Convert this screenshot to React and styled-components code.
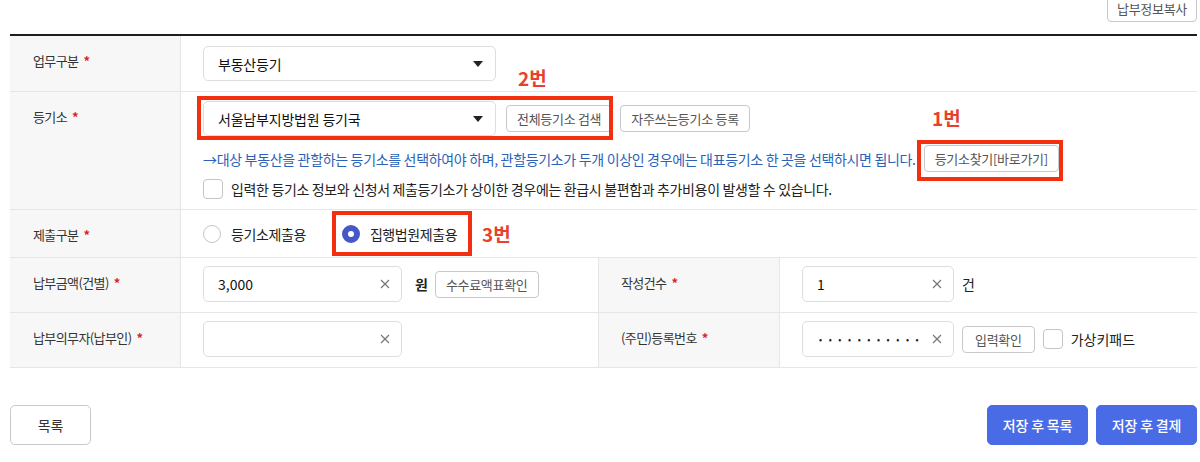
import React from 'react'
import styled, { createGlobalStyle } from 'styled-components'

const GlobalStyle = createGlobalStyle`
  body {
    margin: 0;
    background: #fff;
    font-family: "Noto Sans CJK KR", "Noto Sans", sans-serif;
    color: #222;
  }
`

const Page = styled.div`
  position: relative;
  width: 1200px;
  height: 462px;
  padding: 0 3px 0 10px;
  box-sizing: border-box;
  overflow: hidden;
`

const TopBar = styled.div`
  height: 34px;
  display: flex;
  justify-content: flex-end;
  align-items: flex-start;
`

const Table = styled.div`
  border-top: 2px solid #1e1e1e;
  border-bottom: 1px solid #e6e6e6;
`

const Row = styled.div`
  display: grid;
  grid-template-columns: ${(p) => (p.$split ? '171px 417px 182px 1fr' : '171px 1fr')};
  height: ${(p) => p.$h || 54}px;
  & + & {
    border-top: 1px solid #e6e6e6;
  }
`

const Label = styled.div`
  background: #f7f7f7;
  padding: 15px 0 0 ${(p) => p.$pl || 23}px;
  font-size: 13px;
  line-height: 20px;
  color: #333;
  letter-spacing: -0.6px;
  border-right: 1px solid #e6e6e6;
  border-left: ${(p) => (p.$divider ? '1px solid #e6e6e6' : 'none')};
`

const Req = styled.span`
  color: #d8262a;
  font-weight: 700;
  margin-left: 5px;
`

const Cell = styled.div`
  padding: ${(p) => p.$pad || '10px 0 0 22px'};
  display: flex;
  flex-direction: column;
  justify-content: ${(p) => (p.$center ? 'center' : 'flex-start')};
`

const Line = styled.div`
  display: flex;
  align-items: center;
  gap: ${(p) => p.$gap ?? 8}px;
  min-height: ${(p) => p.$h || 20}px;
  margin-top: ${(p) => p.$mt || 0}px;
`

const Select = styled.div`
  width: 293px;
  height: 35px;
  box-sizing: border-box;
  border: 1px solid #dedede;
  border-radius: 5px;
  display: flex;
  align-items: center;
  justify-content: space-between;
  padding: 0 12px 0 14px;
  font-size: 14px;
  color: #111;
  letter-spacing: -0.2px;
  margin-right: 2px;
  &::after {
    content: '';
    border-left: 5px solid transparent;
    border-right: 5px solid transparent;
    border-top: 6px solid #222;
  }
`

const SmallButton = styled.button`
  height: 27px;
  padding: 0 ${(p) => p.$px || 10}px;
  border: 1px solid #c9c9c9;
  border-radius: 4px;
  background: #fff;
  font-family: inherit;
  font-size: 13px;
  color: #555;
  letter-spacing: -0.3px;
  white-space: nowrap;
  margin-top: ${(p) => p.$mt || 0}px;
`

const Notice = styled.span`
  font-size: 14px;
  color: #2b62b8;
  letter-spacing: -0.33px;
  white-space: nowrap;
`

const Text = styled.span`
  font-size: 14px;
  color: #222;
  letter-spacing: -0.35px;
  white-space: nowrap;
`

const Check = styled.span`
  width: 18px;
  height: 18px;
  border: 1px solid #c4c4c4;
  border-radius: 4px;
  background: #fff;
  flex: none;
  margin-left: ${(p) => p.$ml || 0}px;
`

const Radio = styled.span`
  width: ${(p) => (p.$on ? 6 : 16)}px;
  height: ${(p) => (p.$on ? 6 : 16)}px;
  border-radius: 50%;
  border: ${(p) => (p.$on ? '6px solid #4658c8' : '1px solid #c4c4c4')};
  background: #fff;
  flex: none;
`

const RadioItem = styled.label`
  display: flex;
  align-items: center;
  gap: 10px;
  font-size: 14px;
  color: #222;
  letter-spacing: -0.4px;
  margin-right: 36px;
`

const Input = styled.div`
  width: ${(p) => p.$w}px;
  height: 36px;
  box-sizing: border-box;
  border: 1px solid #dedede;
  border-radius: 5px;
  display: flex;
  align-items: center;
  padding: 0 11px 0 14px;
  font-size: 14px;
  color: #111;
  overflow: hidden;
`

const Value = styled.span`
  flex: 1;
  overflow: hidden;
  white-space: nowrap;
`

const Dots = styled.span`
  flex: 1;
  overflow: hidden;
  white-space: nowrap;
  font-size: 9px;
  letter-spacing: 6.6px;
  padding-left: 2px;
  color: #222;
`

const Clear = styled.svg`
  width: 10px;
  height: 10px;
  flex: none;
  margin-left: 4px;
`

const Unit = styled.span`
  font-size: 14px;
  font-weight: ${(p) => (p.$bold ? 700 : 400)};
  color: #222;
  margin: 0 ${(p) => p.$mr ?? 0}px 0 ${(p) => p.$ml ?? 10}px;
`

const Footer = styled.div`
  display: flex;
  justify-content: space-between;
  margin-top: 37px;
`

const Group = styled.div`
  display: flex;
  gap: 8px;
`

const BigButton = styled.button`
  height: 40px;
  width: ${(p) => p.$w}px;
  border-radius: 5px;
  font-family: inherit;
  font-size: 14px;
  letter-spacing: -0.2px;
  border: 1px solid ${(p) => (p.$primary ? '#4a6be6' : '#c9c9c9')};
  background: ${(p) => (p.$primary ? '#4a6be6' : '#fff')};
  color: ${(p) => (p.$primary ? '#fff' : '#333')};
  font-weight: ${(p) => (p.$primary ? 500 : 400)};
`

const Marker = styled.div`
  position: absolute;
  left: ${(p) => p.$x}px;
  top: ${(p) => p.$y}px;
  width: ${(p) => p.$w}px;
  height: ${(p) => p.$h}px;
  box-sizing: border-box;
  border: 4px solid #f2300f;
  pointer-events: none;
`

const MarkerTag = styled.div`
  position: absolute;
  left: ${(p) => p.$x}px;
  top: ${(p) => p.$y}px;
  font-family: "Noto Sans CJK KR", sans-serif;
  font-weight: 700;
  font-size: 19px;
  line-height: 22px;
  color: #e8402c;
`

const X = () => (
  <Clear viewBox="0 0 10 10">
    <path d="M1 1L9 9M9 1L1 9" stroke="#777" strokeWidth="1.2" />
  </Clear>
)

export default function App() {
  return (
    <>
      <GlobalStyle />
      <Page>
        <TopBar>
          <SmallButton $mt={-5} $px={9}>납부정보복사</SmallButton>
        </TopBar>
        <Table>
          <Row $h={55}>
            <Label>업무구분<Req>*</Req></Label>
            <Cell>
              <Select>부동산등기</Select>
            </Cell>
          </Row>
          <Row $h={117}>
            <Label>등기소<Req>*</Req></Label>
            <Cell $pad="9px 0 0 22px">
              <Line $h={35}>
                <Select>서울남부지방법원 등기국</Select>
                <SmallButton>전체등기소 검색</SmallButton>
                <SmallButton>자주쓰는등기소 등록</SmallButton>
              </Line>
              <Line $h={27} $mt={9}>
                <Notice>→대상 부동산을 관할하는 등기소를 선택하여야 하며, 관할등기소가 두개 이상인 경우에는 대표등기소 한 곳을 선택하시면 됩니다.</Notice>
                <SmallButton>등기소찾기[바로가기]</SmallButton>
              </Line>
              <Line $h={20} $mt={7}>
                <Check />
                <Text>입력한 등기소 정보와 신청서 제출등기소가 상이한 경우에는 환급시 불편함과 추가비용이 발생할 수 있습니다.</Text>
              </Line>
            </Cell>
          </Row>
          <Row $h={47}>
            <Label>제출구분<Req>*</Req></Label>
            <Cell $pad="0 0 0 22px" $center>
              <Line $gap={0}>
                <RadioItem><Radio />등기소제출용</RadioItem>
                <RadioItem><Radio $on />집행법원제출용</RadioItem>
              </Line>
            </Cell>
          </Row>
          <Row $split>
            <Label>납부금액(건별)<Req>*</Req></Label>
            <Cell $pad="8px 0 0 22px">
              <Line $gap={0}>
                <Input $w={199}><Value>3,000</Value><X /></Input>
                <Unit $bold $ml={13} $mr={7}>원</Unit>
                <SmallButton>수수료액표확인</SmallButton>
              </Line>
            </Cell>
            <Label $divider $pl={22}>작성건수<Req>*</Req></Label>
            <Cell $pad="8px 0 0 22px">
              <Line $gap={0}>
                <Input $w={152}><Value>1</Value><X /></Input>
                <Unit $ml={8}>건</Unit>
              </Line>
            </Cell>
          </Row>
          <Row $split>
            <Label>납부의무자(납부인)<Req>*</Req></Label>
            <Cell $pad="8px 0 0 22px">
              <Line $gap={0}>
                <Input $w={199}><Value /><X /></Input>
              </Line>
            </Cell>
            <Label $divider $pl={22}>(주민)등록번호<Req>*</Req></Label>
            <Cell $pad="8px 0 0 22px">
              <Line $gap={8}>
                <Input $w={152}><Dots>•••••••••••</Dots><X /></Input>
                <SmallButton $px={12}>입력확인</SmallButton>
                <Check $ml={0} />
                <Unit $ml={0}>가상키패드</Unit>
              </Line>
            </Cell>
          </Row>
        </Table>
        <Footer>
          <BigButton $w={81}>목록</BigButton>
          <Group>
            <BigButton $primary $w={101}>저장 후 목록</BigButton>
            <BigButton $primary $w={101}>저장 후 결제</BigButton>
          </Group>
        </Footer>

        <Marker $x={197} $y={96} $w={416} $h={44} />
        <MarkerTag $x={518} $y={67}>2번</MarkerTag>
        <Marker $x={917} $y={140} $w={146} $h={41} />
        <MarkerTag $x={932} $y={107}>1번</MarkerTag>
        <Marker $x={332} $y={211} $w={140} $h={45} />
        <MarkerTag $x={482} $y={223}>3번</MarkerTag>
      </Page>
    </>
  )
}
